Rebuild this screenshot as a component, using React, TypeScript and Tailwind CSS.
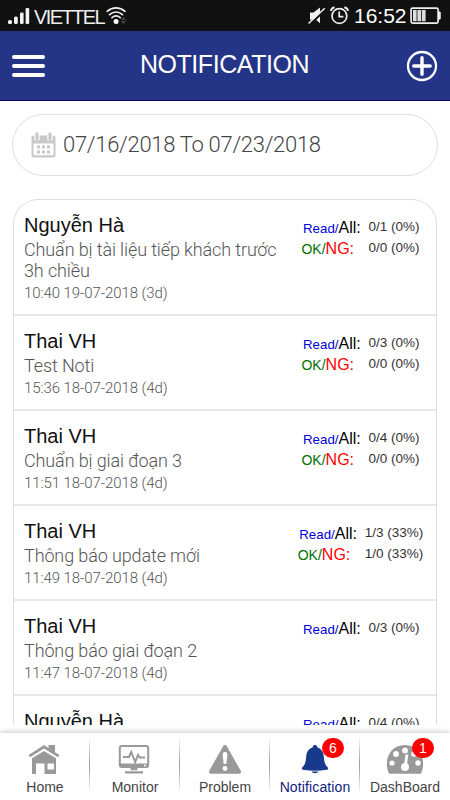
import { ReactNode } from 'react';

interface NotificationItem {
  id: number;
  author: string;
  message: string;
  time: string;
  read: string;
  ok?: string;
}

const NOTIFICATIONS: NotificationItem[] = [
  { id: 1, author: 'Nguyễn Hà', message: 'Chuẩn bị tài liệu tiếp khách trước 3h chiều', time: '10:40 19-07-2018 (3d)', read: '0/1 (0%)', ok: '0/0 (0%)' },
  { id: 2, author: 'Thai VH', message: 'Test Noti', time: '15:36 18-07-2018 (4d)', read: '0/3 (0%)', ok: '0/0 (0%)' },
  { id: 3, author: 'Thai VH', message: 'Chuẩn bị giai đoạn 3', time: '11:51 18-07-2018 (4d)', read: '0/4 (0%)', ok: '0/0 (0%)' },
  { id: 4, author: 'Thai VH', message: 'Thông báo update mới', time: '11:49 18-07-2018 (4d)', read: '1/3 (33%)', ok: '1/0 (33%)' },
  { id: 5, author: 'Thai VH', message: 'Thông báo giai đoạn 2', time: '11:47 18-07-2018 (4d)', read: '0/3 (0%)' },
  { id: 6, author: 'Nguyễn Hà', message: '', time: '', read: '0/4 (0%)' },
];

function StatusBar() {
  return (
    <div className="flex h-[31px] shrink-0 items-center bg-[#111] text-white">
      <svg width="22" height="18" viewBox="0 0 22 18" className="ml-2 fill-[#f2f2f2]">
        <rect x="0" y="13" width="4" height="4" rx="1.5" />
        <rect x="6" y="9.5" width="3.8" height="7.5" rx="1.5" />
        <rect x="12" y="5.5" width="3.6" height="11.5" rx="1.2" />
        <rect x="17.6" y="1" width="3.6" height="16" rx="1.2" />
      </svg>
      <span className="ml-1 w-[70px] whitespace-nowrap pt-[2px] text-[20px] leading-[26px] tracking-[-1.6px] text-[#eee]">VIETTEL</span>
      <svg width="22" height="20" viewBox="0 0 22 20" className="ml-[2px]" fill="none" stroke="#f0f0f0" strokeWidth="1.7" strokeLinecap="round">
        <path d="M1.2 5.3C6.5.8 13.7.8 19 5.3" />
        <path d="M3.6 8.6c3.9-3.2 9-3.2 12.9 0" />
        <path d="M6 11.6c2.4-2 5.8-2 8.2 0" />
        <circle cx="10.1" cy="15.6" r="2.5" fill="#fff" stroke="none" />
        <path d="M17.5 11l2.8 3h-5.6zM17.5 18l2.8-3h-5.6z" fill="#444" stroke="none" />
      </svg>
      <svg width="18" height="18" viewBox="0 0 18 18" className="ml-auto">
        <path d="M2 5.5h3.5L12 .5v15.800L8 12.700H2z" fill="#f0f0f0" />
        <path d="M1.5 17.5L17.5 2.5" stroke="#111" strokeWidth="2.5" />
        <path d="M.5 16.5L16.8 1.3" stroke="#f0f0f0" strokeWidth="1.5" />
      </svg>
      <svg width="19" height="19" viewBox="0 0 19 19" className="ml-[4px]" fill="none" stroke="#f0f0f0" strokeWidth="1.7">
        <circle cx="9.4" cy="10" r="7.4" />
        <path d="M9.2 5.5v5.2h4.2" />
        <path d="M1 5C1.2 2.8 2.6 1.4 4.6 1.4M17.9 5C17.7 2.8 16.3 1.4 14.3 1.4" strokeWidth="2" />
      </svg>
      <span className="ml-[5px] w-[56px] whitespace-nowrap pt-px text-[21px] leading-[26px]">16:52</span>
      <svg width="32" height="18" viewBox="0 0 32 18" className="mr-2">
        <rect x="1.1" y="1.1" width="27" height="15" rx="1.5" fill="none" stroke="#eee" strokeWidth="1.7" />
        <path d="M28.5 5h1.7v7h-1.7z" fill="#eee" stroke="#eee" />
        <path d="M3 3h3.6v11.2H3zM7.4 3H11v11.2H7.4zM11.8 3h3.8v11.2h-3.8z" fill="#ddd" />
      </svg>
    </div>
  );
}

function Header() {
  return (
    <header className="flex h-[70px] shrink-0 items-center justify-between border-b border-[#000068] bg-[#243587] px-3 text-white">
      <button className="flex w-[33px] flex-col gap-[5px]">
        <span className="h-1 w-full rounded-full bg-white" />
        <span className="h-1 w-full rounded-full bg-white" />
        <span className="h-1 w-full rounded-full bg-white" />
      </button>
      <h1 className="-ml-[2px] pb-[3px] text-[25px] leading-[30px] tracking-[-0.45px]">NOTIFICATION</h1>
      <svg width="32" height="32" viewBox="0 0 32 32" fill="none" stroke="#fff" strokeLinecap="round">
        <circle cx="16" cy="16" r="14" strokeWidth="2.3" />
        <path d="M16 7.8v16.4M7.8 16h16.4" strokeWidth="3.4" />
      </svg>
    </header>
  );
}

function CalendarIcon() {
  return (
    <svg width="25" height="26" viewBox="0 0 25 26">
      <path d="M2.5 3.5h20a2 2 0 0 1 2 2V23a2.5 2.5 0 0 1-2.5 2.5H3A2.5 2.5 0 0 1 .5 23V5.5a2 2 0 0 1 2-2z" fill="#c8c8c8" />
      <path d="M3.3 0h5.4v8.2H3.3zM16.3 0h5.4v8.2h-5.4z" fill="#fff" />
      <path d="M6 1.8v5M19 1.8v5" stroke="#c8c8c8" strokeWidth="3.2" strokeLinecap="round" />
      <path d="M2.5 11.5h20v11.8h-20z" fill="#fff" />
      <path d="M6 13.5h3v3H6zM11 13.5h3v3h-3zM16 13.5h3v3h-3zM6 18.5h3v3H6zM11 18.5h3v3h-3zM16 18.5h3v3h-3z" fill="#c8c8c8" />
    </svg>
  );
}

function NotificationRow({ item }: { item: NotificationItem }) {
  return (
    <div className="flex border-b-2 border-[#e8e8e8] pb-3 pl-[10px] pt-3">
      <div className="w-[261px] shrink-0">
        <div className="text-[20px] leading-[27px] text-[#111]">{item.author}</div>
        <div className="font-[Roboto] text-[18px] font-light leading-[21px] tracking-[-0.12px] text-[#555]">{item.message}</div>
        <div className="pt-[3px] font-[Roboto] text-[15px] font-light leading-[18px] tracking-[-0.08px] text-[#555]">{item.time}</div>
      </div>
      <div className="flex flex-1 justify-center">
        <div className="grid auto-rows-[21px] grid-cols-[67px_auto] whitespace-nowrap pt-[5px] text-[13.5px] leading-[21px]">
          <div className="pl-[1.5px] text-[13.3px] text-[#0000d8]">Read/<span className="text-[16px] text-black">All:</span></div>
          <div className="-mt-px text-[#333]">{item.read}</div>
          {item.ok && (
            <>
              <div className="text-[14px] text-[#007000]">OK/<span className="text-[16px] text-[#f00]">NG:</span></div>
              <div className="-mt-px text-[#333]">{item.ok}</div>
            </>
          )}
        </div>
      </div>
    </div>
  );
}

interface TabProps {
  label: string;
  icon: ReactNode;
  active?: boolean;
  badge?: number;
  last?: boolean;
}

function Tab({ label, icon, active, badge, last }: TabProps) {
  return (
    <button className="relative flex flex-1 flex-col items-center pt-[11px]">
      {icon}
      <span className={`pt-[4px] text-[14px] leading-4 ${active ? 'tracking-[0.12px] text-[#101d80]' : 'text-[#444]'}`}>{label}</span>
      {badge && (
        <span className="absolute left-[52px] top-[5px] flex h-5 w-[22px] items-center justify-center rounded-full bg-[#f00] text-[14px] leading-5 text-white">{badge}</span>
      )}
      {!last && <span className="absolute right-0 top-[3px] h-[58px] w-px bg-linear-to-b from-transparent via-[#999] to-transparent" />}
    </button>
  );
}

const HomeIcon = (
  <svg width="32" height="31" viewBox="0 0 32 31" fill="#999" className="-ml-[2px]">
    <path d="M0.7 11L16 1l4.500 2.900V1H27v7.200l4.500 2.900-1.400 2.200L16 4.400 2 13.200z" />
    <path d="M4 14.300L16 7l12 7.300V30H16.500V19.500H8V30H4zM19.500 19.500V25.500h6.500v-6z" fillRule="evenodd" />
  </svg>
);

const MonitorIcon = (
  <svg width="32" height="31" viewBox="0 0 32 31" className="-ml-[2px]">
    <rect x="1.8" y="2" width="28.4" height="21" rx="2" fill="none" stroke="#999" strokeWidth="2" />
    <path d="M1.800 19.500h28.400V22a1.500 1.500 0 0 1-1.500 1.500H3.300A1.500 1.500 0 0 1 1.800 22zM12.500 24h7v2.200h-7zM7 27.200h18v2.300H7z" fill="#999" />
    <path d="M5 13h6l2.200-5 4 10 2.800-7 1.600 2.500H27" fill="none" stroke="#999" strokeWidth="2" />
    <circle cx="27" cy="21.5" r="1" fill="#fff" />
  </svg>
);

const ProblemIcon = (
  <svg width="34" height="31" viewBox="0 0 34 31" className="-ml-px">
    <path d="M17 3L31 27.800H3z" fill="#999" stroke="#999" strokeWidth="4" strokeLinejoin="round" />
    <path d="M14.600 10.500a2.400 2.400 0 0 1 4.800 0l-1.100 9.500h-2.600z" fill="#fff" />
    <circle cx="17" cy="24.500" r="2.400" fill="#fff" />
  </svg>
);

const BellIcon = (
  <svg width="28" height="31" viewBox="0 0 28 31" fill="#173a8c">
    <path d="M14 1c1.500 0 2.400 1 2.400 2.500 4 1.100 6 4.500 6.400 9 .4 5.500 1.200 8.500 4 11 .7.800.3 2-.9 2.200-8 1.300-15.800 1.300-23.800 0-1.200-.2-1.600-1.400-.9-2.200 2.800-2.500 3.600-5.500 4-11 .4-4.500 2.400-7.900 6.400-9C11.600 2 12.500 1 14 1z" />
    <path d="M10.500 27.500h7c-.8 2.200-6.200 2.200-7 0z" />
  </svg>
);

const DashboardIcon = (
  <svg width="38" height="31" viewBox="0 0 38 31">
    <path d="M3 29.800C-3 16 4 1 19 1s22 15 16 28.800z" fill="#999" />
    <g fill="#fff">
      <circle cx="6" cy="19" r="2.6" />
      <circle cx="10" cy="10" r="2.9" />
      <circle cx="19" cy="6.500" r="2.9" />
      <circle cx="28" cy="10" r="2.7" />
      <circle cx="32" cy="19" r="2.7" />
      <circle cx="19" cy="23" r="4" />
      <path d="M17.800 23l1.700-12.500h2.800L20.800 23z" />
    </g>
  </svg>
);

export default function App() {
  return (
    <div className="flex h-[800px] w-[450px] flex-col overflow-hidden bg-white font-['Liberation_Sans',Arial,sans-serif]">
      <StatusBar />
      <Header />
      <main className="flex h-[624px] shrink-0 flex-col px-3 pt-[13px]">
        <div className="flex h-[62px] w-[426px] shrink-0 items-center rounded-full border border-[#ddd] pl-[18px]">
          <CalendarIcon />
          <span className="ml-[7px] whitespace-nowrap pb-[2px] font-[Roboto] text-[22px] font-light tracking-[-0.3px] text-[#444]">07/16/2018 To 07/23/2018</span>
        </div>
        <div className="ml-px mt-[23px] w-[424px] flex-1 overflow-hidden rounded-t-[25px] border border-b-0 border-[#ddd]">
          {NOTIFICATIONS.map(n => <NotificationRow key={n.id} item={n} />)}
        </div>
      </main>
      <nav className="mt-[8px] flex h-[67px] shrink-0 shadow-[0_-1px_5px_rgba(0,0,0,0.22)]">
        <Tab label="Home" icon={HomeIcon} />
        <Tab label="Monitor" icon={MonitorIcon} />
        <Tab label="Problem" icon={ProblemIcon} />
        <Tab label="Notification" icon={BellIcon} active badge={6} />
        <Tab label="DashBoard" icon={DashboardIcon} badge={1} last />
      </nav>
    </div>
  );
}
